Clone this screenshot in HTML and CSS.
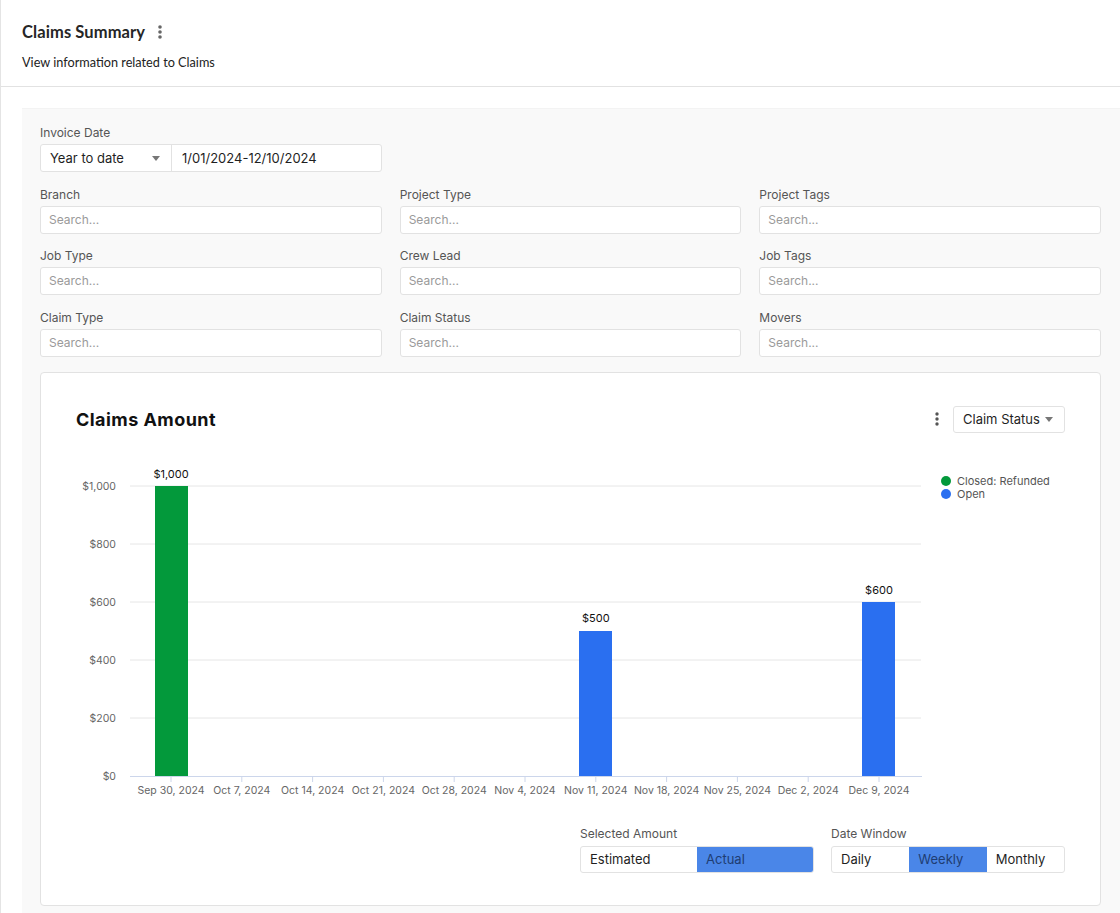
FILE: index.html
```html
<!DOCTYPE html>
<html lang="en">
<head>
<meta charset="utf-8">
<title>Claims Summary</title>
<link rel="stylesheet" href="styles.css">
</head>
<body>
<div class="page">
  <header class="head">
    <div class="title-row">
      <h1 class="title">Claims Summary</h1>
      <svg class="kebab" width="6" height="16" viewBox="0 0 6 16"><circle cx="3" cy="3" r="1.8"/><circle cx="3" cy="8" r="1.8"/><circle cx="3" cy="13" r="1.8"/></svg>
    </div>
    <p class="sub">View information related to Claims</p>
  </header>

  <main class="panel">
    <div class="filters">
      <div class="field">
        <label class="lbl">Invoice Date</label>
        <div class="date-range">
          <div class="select">Year to date<svg class="caret" width="8" height="5" viewBox="0 0 8 5"><path d="M0 0h8L4 5z"/></svg></div>
          <div class="date">1/01/2024-12/10/2024</div>
        </div>
      </div>
      <div class="field first"><label class="lbl">Branch</label><div class="input">Search...</div></div>
      <div class="field"><label class="lbl">Project Type</label><div class="input">Search...</div></div>
      <div class="field"><label class="lbl">Project Tags</label><div class="input">Search...</div></div>
      <div class="field"><label class="lbl">Job Type</label><div class="input">Search...</div></div>
      <div class="field"><label class="lbl">Crew Lead</label><div class="input">Search...</div></div>
      <div class="field"><label class="lbl">Job Tags</label><div class="input">Search...</div></div>
      <div class="field"><label class="lbl">Claim Type</label><div class="input">Search...</div></div>
      <div class="field"><label class="lbl">Claim Status</label><div class="input">Search...</div></div>
      <div class="field"><label class="lbl">Movers</label><div class="input">Search...</div></div>
    </div>

    <section class="card">
      <div class="card-head">
        <h2 class="card-title">Claims Amount</h2>
        <div class="card-tools">
          <svg class="kebab dark" width="6" height="16" viewBox="0 0 6 16"><circle cx="3" cy="3" r="1.7"/><circle cx="3" cy="8" r="1.7"/><circle cx="3" cy="13" r="1.7"/></svg>
          <div class="dropdown">Claim Status<svg class="caret" width="8" height="5" viewBox="0 0 8 5"><path d="M0 0h8L4 5z"/></svg></div>
        </div>
      </div>

      <svg class="chart" width="989" height="345" viewBox="0 0 989 345">
        <g class="grid">
          <line x1="54" y1="31" x2="845" y2="31"/>
          <line x1="54" y1="89" x2="845" y2="89"/>
          <line x1="54" y1="147" x2="845" y2="147"/>
          <line x1="54" y1="205" x2="845" y2="205"/>
          <line x1="54" y1="263" x2="845" y2="263"/>
        </g>
        <g class="ylab">
          <text x="40" y="35">$1,000</text>
          <text x="40" y="93">$800</text>
          <text x="40" y="151">$600</text>
          <text x="40" y="209">$400</text>
          <text x="40" y="267">$200</text>
          <text x="40" y="325">$0</text>
        </g>
        <rect class="bar-green" x="79" y="31" width="33" height="290"/>
        <rect class="bar-blue" x="503" y="176" width="33" height="145"/>
        <rect class="bar-blue" x="786" y="147" width="33" height="174"/>
        <g class="axis">
          <line x1="54" y1="321.5" x2="846" y2="321.5"/>
          <line x1="95" y1="321" x2="95" y2="327"/>
          <line x1="165.8" y1="321" x2="165.8" y2="327"/>
          <line x1="236.6" y1="321" x2="236.6" y2="327"/>
          <line x1="307.4" y1="321" x2="307.4" y2="327"/>
          <line x1="378.2" y1="321" x2="378.2" y2="327"/>
          <line x1="449" y1="321" x2="449" y2="327"/>
          <line x1="519.8" y1="321" x2="519.8" y2="327"/>
          <line x1="590.6" y1="321" x2="590.6" y2="327"/>
          <line x1="661.4" y1="321" x2="661.4" y2="327"/>
          <line x1="732.2" y1="321" x2="732.2" y2="327"/>
          <line x1="803" y1="321" x2="803" y2="327"/>
        </g>
        <g class="vlab">
          <text x="95" y="23">$1,000</text>
          <text x="519.8" y="167">$500</text>
          <text x="803" y="139">$600</text>
        </g>
        <g class="xlab">
          <text x="95" y="339">Sep 30, 2024</text>
          <text x="165.8" y="339">Oct 7, 2024</text>
          <text x="236.6" y="339">Oct 14, 2024</text>
          <text x="307.4" y="339">Oct 21, 2024</text>
          <text x="378.2" y="339">Oct 28, 2024</text>
          <text x="449" y="339">Nov 4, 2024</text>
          <text x="519.8" y="339">Nov 11, 2024</text>
          <text x="590.6" y="339">Nov 18, 2024</text>
          <text x="661.4" y="339">Nov 25, 2024</text>
          <text x="732.2" y="339">Dec 2, 2024</text>
          <text x="803" y="339">Dec 9, 2024</text>
        </g>
        <g class="legend">
          <circle class="dot-green" cx="870" cy="26" r="5"/>
          <text x="881" y="30">Closed: Refunded</text>
          <circle class="dot-blue" cx="870" cy="39" r="5"/>
          <text x="881" y="43">Open</text>
        </g>
      </svg>

      <div class="controls">
        <div class="ctrl">
          <div class="lbl">Selected Amount</div>
          <div class="seg two">
            <div class="opt">Estimated</div>
            <div class="opt on">Actual</div>
          </div>
        </div>
        <div class="ctrl">
          <div class="lbl">Date Window</div>
          <div class="seg three">
            <div class="opt">Daily</div>
            <div class="opt on">Weekly</div>
            <div class="opt">Monthly</div>
          </div>
        </div>
      </div>
    </section>
  </main>
</div>
</body>
</html>
```

FILE: styles.css
```css
* { box-sizing: border-box; }
html, body { margin: 0; padding: 0; background: #fff; }
body { font-family: Inter, "Noto Sans", "Liberation Sans", sans-serif; color: #222; }

.page {
  border-left: 1px solid #e4e4e4;
  min-height: 913px;
}

.head {
  padding: 22px 0 16px 21px;
  border-bottom: 1px solid #e2e2e2;
}
.title-row { display: flex; align-items: center; gap: 12px; height: 20px; }
.title {
  margin: 0;
  font-family: Lato, "Liberation Sans", sans-serif;
  font-size: 16.5px;
  font-weight: 700;
  letter-spacing: 0.1px;
  line-height: 20px;
  color: #262626;
}
.kebab { fill: #666; display: block; }
.kebab.dark { fill: #555; }
.sub {
  margin: 12px 0 0;
  font-family: Lato, "Liberation Sans", sans-serif;
  font-size: 12.7px;
  line-height: 16px;
  color: #222;
}

.panel {
  margin: 21px 0 0 21px;
  background: #f9f9f9;
  border-top: 1px solid #f3f3f3;
  padding: 16px 19px 30px 18px;
}

.filters {
  display: grid;
  grid-template-columns: repeat(3, 1fr);
  column-gap: 18px;
  row-gap: 14.5px;
}
.field.first { grid-column-start: 1; }
.lbl {
  display: block;
  font-size: 12px;
  line-height: 16px;
  color: #555;
  margin-bottom: 3px;
}
.input {
  height: 28px;
  background: #fff;
  border: 1px solid #e2e2e2;
  border-radius: 3px;
  padding: 0 8px;
  font-size: 12px;
  line-height: 26px;
  color: #9a9a9a;
}
.date-range {
  display: flex;
  height: 28px;
  background: #fff;
  border: 1px solid #e2e2e2;
  border-radius: 3px;
  font-size: 13px;
  color: #1f1f1f;
}
.select {
  width: 131px;
  display: flex;
  align-items: center;
  justify-content: space-between;
  padding: 0 11px 0 9px;
  border-right: 1px solid #e2e2e2;
}
.date { padding: 0 10px; line-height: 26px; }
.caret { fill: #777; display: block; }

.card {
  margin-top: 15px;
  background: #fff;
  border: 1px solid #e2e2e2;
  border-radius: 4px;
  padding: 33px 35px 32px 35px;
}
.card-head {
  display: flex;
  align-items: center;
  justify-content: space-between;
  height: 27px;
}
.card-title {
  margin: 0;
  font-size: 18px;
  font-weight: 700;
  letter-spacing: 0.45px;
  color: #111;
}
.card-tools { display: flex; align-items: center; gap: 13px; }
.dropdown {
  height: 27px;
  width: 112px;
  display: flex;
  align-items: center;
  gap: 5px;
  padding: 0 9px;
  background: #fff;
  border: 1px solid #e2e2e2;
  border-radius: 3px;
  font-size: 13px;
  color: #1f1f1f;
}
.dropdown .caret { fill: #777; }

.chart { display: block; margin-top: 22px; font-family: Inter, "Noto Sans", sans-serif; }
.grid line { stroke: #e6e6e6; stroke-width: 1; }
.axis line { stroke: #ccd6eb; stroke-width: 1; }
.ylab text { font-size: 10.5px; fill: #666; text-anchor: end; }
.xlab text { font-size: 10.5px; fill: #666; text-anchor: middle; }
.vlab text { font-size: 11px; fill: #111; text-anchor: middle; }
.legend text { font-size: 11px; fill: #555; }
.bar-green, .dot-green { fill: #03993b; }
.bar-blue, .dot-blue { fill: #2a6ff0; }

.controls {
  margin-top: 26px;
  display: flex;
  justify-content: flex-end;
  gap: 17px;
}
.ctrl { width: 234px; }
.ctrl .lbl { margin-bottom: 4px; }
.seg {
  display: flex;
  height: 27px;
  border: 1px solid #e2e2e2;
  border-radius: 3px;
  overflow: hidden;
  font-size: 13px;
  color: #1f1f1f;
}
.seg .opt { flex: 1; display: flex; align-items: center; padding-left: 9px; }
.seg .opt.on { background: #4a86e8; color: #1f3d73; }
```
